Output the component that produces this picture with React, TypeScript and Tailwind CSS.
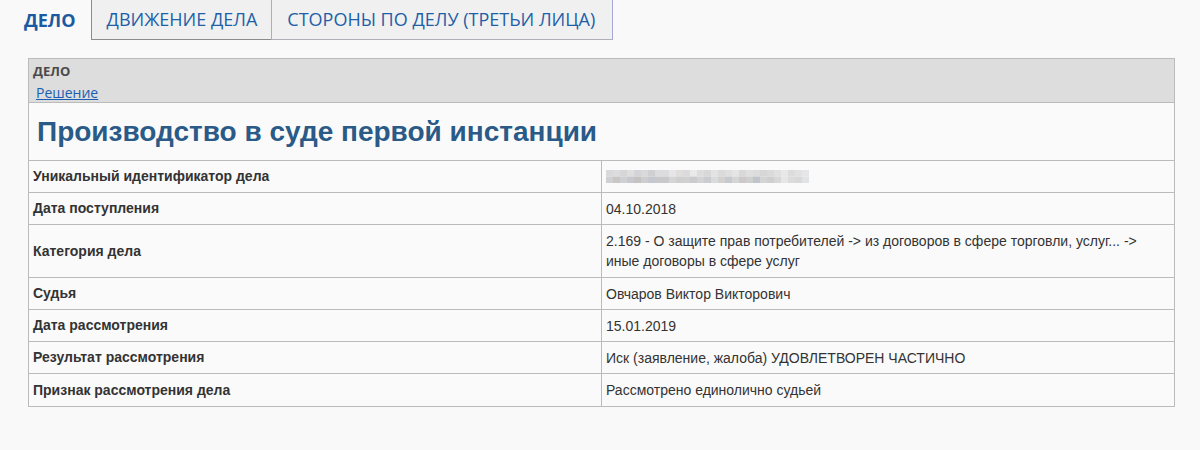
import React from "react";

const shades = [
  "#d9d9db","#dcdcdc","#d6d6d8","#dededf","#d3d4d8","#d9d9da","#cfcfd2","#dcdcdc","#dcdcde","#e6e6e8","#dfdedc","#dbdbdb","#e9e9ea","#dddddd","#d8d8d8","#e3e3e4","#dadada","#dfdfe1","#e5e5e6","#d7d8da","#dfdfdf","#dcdcdc","#d6d6d6","#dadada","#e0e0e0","#e8e8e8","#dcdcdc","#e1e1e2","#e6e6e8",
  "#d0d0d2","#c9c6c6","#cfd0d4","#c8c9ce","#c6c2c4","#cdcdd0","#c5c8cf","#c9c8cb","#c9c9cb","#d5d5d6","#cfcfcf","#cfd0d2","#cbcbcd","#d3d3d4","#cbccd0","#dadbdc","#d3d1cf","#c7c9ce","#d5d5d6","#ccc9c8","#d0cfd0","#c0c5cc","#d4d4d5","#cfcfd0","#d7d7d8","#e6e6e6","#dddcdc","#d9d9db","#e2e3e5",
];

function BlurId() {
  const top = shades.slice(0, 29);
  const bottom = shades.slice(29, 58);
  return (
    <svg width="203" height="13" viewBox="0 0 203 13" className="block">
      {top.map((c, i) => (
        <rect key={"t" + i} x={i * 7} y={0} width={7} height={6.5} fill={c} />
      ))}
      {bottom.map((c, i) => (
        <rect key={"b" + i} x={i * 7} y={6.5} width={7} height={6.5} fill={c} />
      ))}
    </svg>
  );
}

const rows: { label: string; value: React.ReactNode; h: string }[] = [
  { label: "Уникальный идентификатор дела", value: <BlurId />, h: "h-[32px]" },
  { label: "Дата поступления", value: "04.10.2018", h: "h-[32px]" },
  {
    label: "Категория дела",
    value: (
      <>
        2.169 - О защите прав потребителей -&gt; из договоров в сфере торговли, услуг... -&gt;
        <br />
        иные договоры в сфере услуг
      </>
    ),
    h: "h-[53px]",
  },
  { label: "Судья", value: "Овчаров Виктор Викторович", h: "h-[32px]" },
  { label: "Дата рассмотрения", value: "15.01.2019", h: "h-[32px]" },
  { label: "Результат рассмотрения", value: "Иск (заявление, жалоба) УДОВЛЕТВОРЕН ЧАСТИЧНО", h: "h-[32px]" },
  { label: "Признак рассмотрения дела", value: "Рассмотрено единолично судьей", h: "h-[32px]" },
];

export default function App() {
  return (
    <div className="w-[1200px] h-[450px] bg-[#f9f9f9] overflow-hidden">
      {/* Tabs */}
      <div className="flex h-[40px] pl-[9px] font-['Open_Sans',sans-serif] text-[18px]">
        <div className="flex items-center px-[15px] font-bold text-[#1b5aa1]">ДЕЛО</div>
        <div className="flex items-center pl-[15px] pr-[14px] bg-[#f0f0f0] text-[#1e5fa8] border-l border-l-[#8a8aa8] border-b border-b-[#8c8c8c]">
          ДВИЖЕНИЕ ДЕЛА
        </div>
        <div className="flex items-center pl-[15px] pr-[17px] bg-[#f0f0f0] text-[#1e5fa8] border-l border-l-[#aaaad8] border-r border-r-[#a8a8d6] border-b border-b-[#b0b0b8]">
          СТОРОНЫ ПО ДЕЛУ (ТРЕТЬИ ЛИЦА)
        </div>
      </div>

      {/* Table */}
      <div className="ml-[28px] mt-[18px] w-[1147px] border border-[#bbbbbb] bg-[#fafafa]">
        <div className="bg-[#dddddd] h-[44px] border-b border-[#bbbbbb] px-[4px] pt-[3px] font-['Open_Sans',sans-serif]">
          <div className="text-[13px] font-bold text-[#4a4a4a] leading-[18px]">ДЕЛО</div>
          <a href="#" className="ml-[3px] text-[14px] leading-[20px] text-[#1a5fb4] underline">
            Решение
          </a>
        </div>
        <div className="h-[58px] flex items-center px-[8px] border-b border-[#bbbbbb]">
          <h1 className="font-['Liberation_Sans',Arial,sans-serif] font-bold text-[28px] text-[#2a5a88] leading-none">
            Производство в суде первой инстанции
          </h1>
        </div>
        {rows.map((r, i) => (
          <div
            key={i}
            className={`flex ${r.h} ${i < rows.length - 1 ? "border-b border-[#bbbbbb]" : ""} font-['Liberation_Sans',Arial,sans-serif] text-[14px] text-[#333333]`}
          >
            <div className="w-[573px] shrink-0 flex items-center px-[4px] font-bold border-r border-[#bbbbbb]">
              {r.label}
            </div>
            <div className="flex-1 flex items-center px-[4px] leading-[20px]">
              <div>{r.value}</div>
            </div>
          </div>
        ))}
      </div>
    </div>
  );
}
